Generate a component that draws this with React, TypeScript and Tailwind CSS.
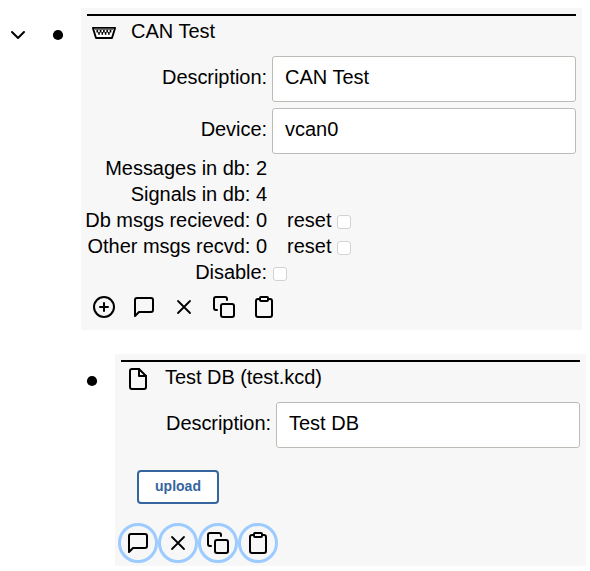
import type { ReactNode } from "react";

function Svg({ children, sw = 2 }: { children: ReactNode; sw?: number }) {
  return (
    <svg className="shrink-0" width="24" height="24" viewBox="0 0 24 24" fill="none" stroke="currentColor" strokeWidth={sw} strokeLinecap="round" strokeLinejoin="round">
      {children}
    </svg>
  );
}

const PlusCircle = () => <Svg><circle cx="12" cy="12" r="10" /><path d="M12 8v8M8 12h8" /></Svg>;
const Message = () => <Svg><path d="M21 15a2 2 0 0 1-2 2H7l-4 4V5a2 2 0 0 1 2-2h14a2 2 0 0 1 2 2z" /></Svg>;
const Close = () => <Svg sw={1.8}><path d="M18 6L6 18M6 6l12 12" /></Svg>;
const Copy = () => (
  <Svg>
    <rect x="9" y="9" width="13" height="13" rx="2" />
    <path d="M5 15H4a2 2 0 0 1-2-2V4a2 2 0 0 1 2-2h9a2 2 0 0 1 2 2v1" />
  </Svg>
);
const Clipboard = () => (
  <Svg>
    <path d="M16 4h2a2 2 0 0 1 2 2v14a2 2 0 0 1-2 2H6a2 2 0 0 1-2-2V6a2 2 0 0 1 2-2h2" />
    <rect x="8" y="2" width="8" height="4" rx="1" />
  </Svg>
);
const File = () => (
  <Svg>
    <path d="M13 2H6a2 2 0 0 0-2 2v16a2 2 0 0 0 2 2h12a2 2 0 0 0 2-2V9z" />
    <path d="M13 2v7h7" />
  </Svg>
);

function SerialPort() {
  return (
    <svg className="shrink-0" width="26" height="24" viewBox="0 0 26 24">
      <path d="M1.9 6.9h22.2L21 17H5z" fill="white" stroke="black" strokeWidth="1.9" strokeLinejoin="round" />
      <path d="M4 8.4h18" stroke="#555" strokeWidth="1" />
      <path d="M6.3 9v2.4M9.6 9v2.4M12.9 9v2.4M16.2 9v2.4M19.5 9v2.4" stroke="black" strokeWidth="1.7" />
      <path d="M8 11v2.8M11.3 11v2.8M14.6 11v2.8M17.9 11v2.8" stroke="black" strokeWidth="1.6" />
    </svg>
  );
}

function Field({ label, value, labelWidth }: { label: string; value: string; labelWidth: string }) {
  return (
    <div className="flex h-[46px] gap-[5px]">
      <div className={`${labelWidth} pt-2 text-right tracking-[-0.05px] whitespace-nowrap`}>{label}</div>
      <div className="flex-1 rounded-[3px] border border-[#babdb6] bg-white px-3 pt-[7px]">{value}</div>
    </div>
  );
}

const Check = () => <span className="mt-[3px] block size-[14px] rounded-[3px] border border-[#d3d3d3] bg-white" />;

function Stat({ label, reset }: { label: string; reset?: boolean }) {
  return (
    <div className="flex h-[26px] items-center">
      <div className="flex w-[180px] justify-end tracking-[-0.03px] whitespace-nowrap">{label}</div>
      {reset && <div className="ml-5 flex items-center gap-[6px]">reset<Check /></div>}
    </div>
  );
}

const Bullet = () => (
  <svg className="shrink-0" width="12" height="12" viewBox="0 0 12 12"><circle cx="6" cy="6" r="5.1" /></svg>
);

function Ring({ children }: { children: ReactNode }) {
  return <div className="flex size-10 items-center justify-center rounded-full border-3 border-[#9bcbff]">{children}</div>;
}

export default function App() {
  return (
    <div className="h-[571px] w-[590px] overflow-hidden bg-white pt-2 font-['Liberation_Sans',Arial,sans-serif] text-[20px] leading-[26px] text-black">
      <div className="flex">
        <div className="flex w-[81px] shrink-0 pl-[6px]">
          <div className="pt-[15px]"><Svg><path d="M6 9l6 6 6-6" /></Svg></div>
          <div className="pt-[21px] pl-[22px]"><Bullet /></div>
        </div>
        <div className="h-[322px] w-[501px] bg-[#f7f7f7] p-[6px]">
          <div className="flex h-[42px] gap-[14px] border-t-2 border-black pt-[2px] pl-1">
            <div className="pt-[3px]"><SerialPort /></div>
            <div>CAN Test</div>
          </div>
          <div className="flex flex-col gap-[6px]">
            <Field label="Description:" value="CAN Test" labelWidth="w-[180px]" />
            <Field label="Device:" value="vcan0" labelWidth="w-[180px]" />
          </div>
          <div className="pt-px">
            <Stat label="Messages in db: 2" />
            <Stat label="Signals in db: 4" />
            <Stat label="Db msgs recieved: 0" reset />
            <Stat label="Other msgs recvd: 0" reset />
            <div className="flex h-[26px] items-center gap-[6px]">
              <div className="w-[180px] text-right tracking-[-0.05px]">Disable:</div>
              <Check />
            </div>
          </div>
          <div className="flex gap-4 pt-[10px] pl-[5px]">
            <PlusCircle /><Message /><Close /><Copy /><Clipboard />
          </div>
        </div>
      </div>
      <div className="mt-6 flex">
        <div className="w-[115px] shrink-0 pt-[21px] pl-[86px]"><Bullet /></div>
        <div className="h-[212px] w-[471px] bg-[#f7f7f7] p-[6px]">
          <div className="flex h-[42px] gap-[15px] border-t-2 border-black pt-[2px] pl-[5px]">
            <div className="pt-[3px]"><File /></div>
            <div className="tracking-[-0.05px]">Test DB (test.kcd)</div>
          </div>
          <Field label="Description:" value="Test DB" labelWidth="w-[150px]" />
          <div className="mt-[22px] ml-4 flex h-[34px] w-[82px] items-center justify-center rounded-[4px] border-2 border-[#34659d] bg-white pb-[2px] text-[14px] leading-[18px] font-bold text-[#34659d]">upload</div>
          <div className="mt-[19px] -ml-[3px] flex">
            <Ring><Message /></Ring>
            <Ring><Close /></Ring>
            <Ring><Copy /></Ring>
            <Ring><Clipboard /></Ring>
          </div>
        </div>
      </div>
    </div>
  );
}
